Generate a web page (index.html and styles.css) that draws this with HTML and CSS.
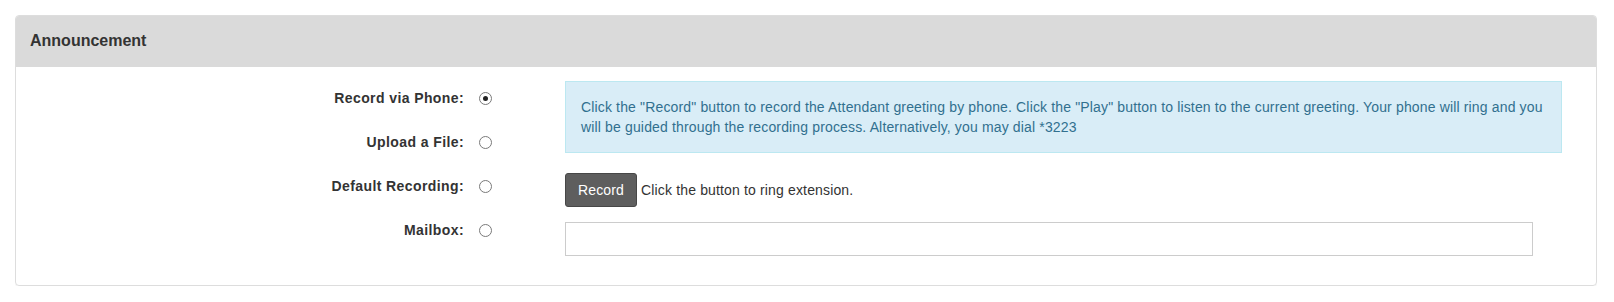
FILE: index.html
```html
<!DOCTYPE html>
<html lang="en">
<head>
    <meta charset="UTF-8">
    <title>Announcement</title>
    <link rel="stylesheet" href="styles.css">
</head>
<body>

    <div class="panel">
        <div class="panel-heading">Announcement</div>
        <div class="panel-body">
            <div class="choices">
                <div class="choice">
                    <span class="choice-label">Record via Phone:</span>
                    <span class="radio checked"></span>
                </div>
                <div class="choice">
                    <span class="choice-label">Upload a File:</span>
                    <span class="radio"></span>
                </div>
                <div class="choice">
                    <span class="choice-label">Default Recording:</span>
                    <span class="radio"></span>
                </div>
                <div class="choice">
                    <span class="choice-label">Mailbox:</span>
                    <span class="radio"></span>
                </div>
            </div>
            <div class="details">
                <div class="alert">
                    Click the "Record" button to record the Attendant greeting by phone. Click the "Play" button to listen to the current greeting. Your phone will ring and you will be guided through the recording process. Alternatively, you may dial *3223
                </div>
                <div class="record-line">
                    <button class="btn">Record</button> Click the button to ring extension.
                </div>
                <input class="mailbox-input" type="text">
            </div>
        </div>
    </div>

</body>
</html>
```

FILE: styles.css
```css
body {
    margin: 15px 17px 0 15px;
    font-family: "Liberation Sans", Arial, sans-serif;
    font-size: 14px;
    line-height: 20px;
    letter-spacing: 0.15px;
    color: #333;
    background-color: #fff;
}
.panel {
    border: 1px solid #ddd;
    border-radius: 4px;
    box-shadow: 0 1px 1px rgba(0, 0, 0, 0.05);
}
.panel-heading {
    background-color: #dadada;
    padding: 15px 14px 16px;
    font-size: 16px;
    font-weight: bold;
    letter-spacing: 0;
    border-radius: 3px 3px 0 0;
}
.panel-body {
    display: flex;
    padding: 9px 34px 29px 0;
}
.choices {
    width: 549px;
    flex-shrink: 0;
}
.choice {
    height: 44px;
    display: flex;
    align-items: center;
    justify-content: flex-end;
    padding-right: 73px;
}
.choice-label {
    font-weight: bold;
    letter-spacing: 0.4px;
}
.radio {
    width: 11px;
    height: 11px;
    border: 1px solid #7a7a7a;
    border-radius: 50%;
    margin-left: 15px;
    position: relative;
    background-color: #fff;
}
.radio.checked::after {
    content: "";
    position: absolute;
    left: 3px;
    top: 3px;
    width: 5px;
    height: 5px;
    border-radius: 50%;
    background-color: #222;
}
.details {
    flex: 1;
    padding-top: 5px;
}
.alert {
    background-color: #d9edf7;
    border: 1px solid #bce8f1;
    color: #31708f;
    padding: 15px;
}
.record-line {
    margin-top: 20px;
}
.btn {
    font-family: "Liberation Sans", Arial, sans-serif;
    font-size: 14px;
    line-height: 20px;
    letter-spacing: 0.15px;
    padding: 6px 12px;
    color: #fff;
    background-color: #5e5e5e;
    border: 1px solid #474747;
    border-radius: 3px;
    cursor: pointer;
}
.mailbox-input {
    display: block;
    box-sizing: border-box;
    width: 968px;
    height: 34px;
    margin-top: 15px;
    border: 1px solid #ccc;
    padding: 6px 12px;
    font-size: 14px;
}
```
